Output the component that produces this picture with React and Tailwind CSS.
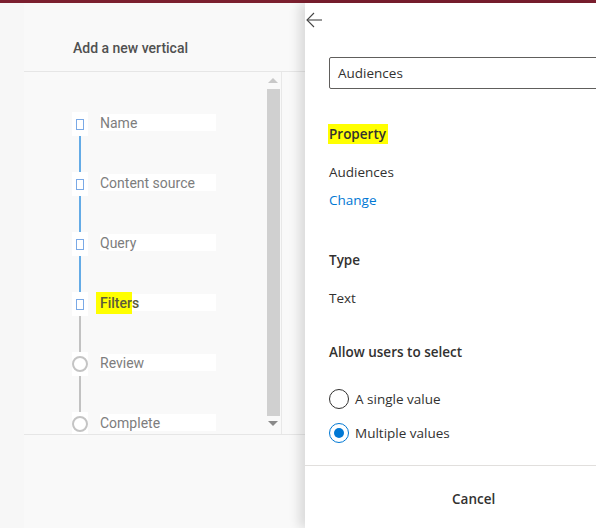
import { useState } from "react";

const steps = [
  { label: "Name", done: true },
  { label: "Content source", done: true },
  { label: "Query", done: true },
  { label: "Filters", done: true, current: true },
  { label: "Review", done: false },
  { label: "Complete", done: false },
];

function StepIcon({ done }) {
  if (done) {
    return <div className="w-[8px] h-[11px] border border-[#7aa9e6] bg-white" />;
  }
  return <div className="w-[16px] h-[16px] rounded-full border-2 border-[#c4c4c4]" />;
}

function Stepper() {
  return (
    <div className="pt-[40px] pl-[48px]">
      {steps.map((s, i) => {
        const last = i === steps.length - 1;
        // line after a step is blue only while the next step is also done
        const blue = !last && steps[i + 1].done;
        return (
          <div key={s.label} className="flex items-start h-[60px]">
            <div className="flex flex-col items-center w-[16px] h-full">
              <div className="w-[16px] h-[24px] bg-white flex items-center justify-center">
                <StepIcon done={s.done} />
              </div>
              {!last && (
                <div className={`w-[2px] flex-1 ${blue ? "bg-[#64abe6]" : "bg-[#c2c2c2]"}`} />
              )}
            </div>
            <div className="ml-[12px] mt-[2px] w-[116px] h-[17px] bg-white text-[14px] leading-[19px] text-[#7d7d7d]">
              {s.current ? (
                <span className="text-[#5c5c3a] font-medium">
                  <span className="bg-[#ffff00] -ml-[4px] pl-[4px] py-[3px]">Filter</span>s
                </span>
              ) : (
                s.label
              )}
            </div>
          </div>
        );
      })}
    </div>
  );
}

function Radio({ checked, label, onClick }) {
  return (
    <button onClick={onClick} className="flex items-center h-[20px] text-left">
      <span
        className={`w-[20px] h-[20px] rounded-full border flex items-center justify-center ${
          checked ? "border-[#0078d4]" : "border-[#323130]"
        }`}
      >
        {checked && <span className="w-[10px] h-[10px] rounded-full bg-[#0078d4]" />}
      </span>
      <span className="ml-[6px] text-[13.5px] text-[#323130]">{label}</span>
    </button>
  );
}

export default function App() {
  const [multi, setMulti] = useState(true);

  return (
    <div className="w-[596px] h-[528px] overflow-hidden flex flex-col bg-[#f7f7f7]">
      <div className="h-[3px] bg-[#7b1f2f] shrink-0" />
      <div className="flex flex-1 min-h-0">
        {/* wizard behind the flyout */}
        <div className="w-[305px] shrink-0 pl-[24px] font-['Roboto',sans-serif]">
          <div className="h-full bg-[#f9f9f9] flex flex-col">
            <div className="h-[69px] shrink-0 border-b border-[#e6e6e6] pl-[49px] pt-[35px] text-[14px] leading-[20px] font-medium text-[#505050]">
              Add a new vertical
            </div>
            <div className="h-[363px] shrink-0 flex overflow-hidden border-b border-[#e6e6e6]">
              <div className="flex-1">
                <Stepper />
              </div>
              <div className="w-[19px] border-r border-[#e8e8e8] flex flex-col items-center pt-[6px] pl-[2px]">
                <div className="w-0 h-0 border-l-[5px] border-r-[5px] border-b-[5px] border-l-transparent border-r-transparent border-b-[#c8c8c8]" />
                <div className="w-[13px] h-[327px] mt-[6px] bg-[#d0d0d0]" />
                <div className="mt-[5px] w-0 h-0 border-l-[5px] border-r-[5px] border-t-[5px] border-l-transparent border-r-transparent border-t-[#8a8a8a]" />
              </div>
              <div className="w-[23px]" />
            </div>
          </div>
        </div>

        {/* flyout panel */}
        <div className="flex-1 bg-white shadow-[-6px_0_10px_rgba(0,0,0,0.12)] font-['Open_Sans',sans-serif] text-[#323130] flex flex-col">
          <div className="mt-[9px] ml-[1px] h-[16px]">
            <svg width="16" height="16" viewBox="0 0 16 16" fill="none" stroke="#444" strokeWidth="1.1">
              <path d="M16 8H1" />
              <path d="M8 1L1 8L8 15" />
            </svg>
          </div>
          <div className="pl-[24px] flex flex-col">
            <div className="mt-[29px] h-[32px] -mr-[10px] border border-[#605e5c] rounded-[2px] flex items-center pl-[8px] text-[13.5px]">
              Audiences
            </div>
            <div className="mt-[35px] h-[20px] text-[13.5px] font-semibold leading-[20px]">
              <span className="bg-[#ffff00] pl-[1px] pr-[2px] py-[1px] -ml-[1px]">Property</span>
            </div>
            <div className="mt-[18px] h-[20px] text-[13.5px] leading-[20px]">Audiences</div>
            <div className="mt-[8px] h-[20px] text-[13.5px] leading-[20px] text-[#0078d4]">Change</div>
            <div className="mt-[40px] h-[20px] text-[13.5px] leading-[20px] font-semibold">Type</div>
            <div className="mt-[18px] h-[20px] text-[13.5px] leading-[20px]">Text</div>
            <div className="mt-[34px] h-[20px] text-[13.5px] leading-[20px] font-semibold">Allow users to select</div>
            <div className="mt-[27px]">
              <Radio checked={!multi} label="A single value" onClick={() => setMulti(false)} />
            </div>
            <div className="mt-[14px]">
              <Radio checked={multi} label="Multiple values" onClick={() => setMulti(true)} />
            </div>
          </div>
          <div className="mt-[22px] border-t border-[#e1dfdd] pt-[20px] pl-[147px]">
            <button className="h-[20px] text-[13.5px] leading-[20px] font-semibold text-[#323130]">Cancel</button>
          </div>
        </div>
      </div>
    </div>
  );
}
